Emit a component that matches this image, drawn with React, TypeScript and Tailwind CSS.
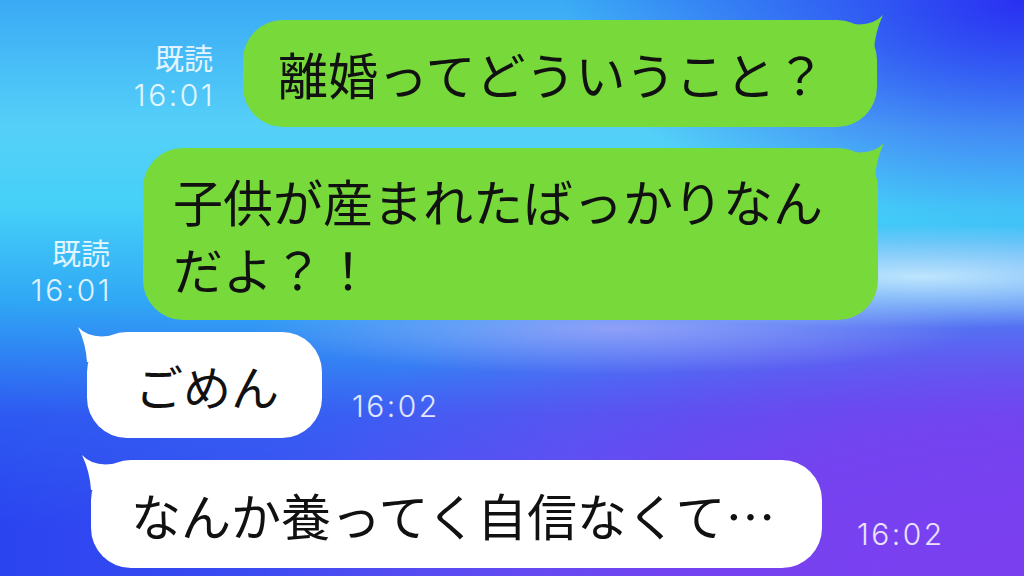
import React from 'react';

const jp = "[font-family:'Noto_Sans_CJK_JP','Noto_Sans',sans-serif]";
const digits = "[font-family:Inter,'Noto_Sans',sans-serif]";

function Horn({ color, side }: { color: string; side: 'left' | 'right' }) {
  return (
    <svg
      width="40"
      height="40"
      viewBox="0 0 40 40"
      className={
        side === 'right'
          ? 'absolute -right-[8px] -top-[6px]'
          : 'absolute -left-[11px] -top-[6px] -scale-x-100'
      }
    >
      <path d="M2 9 Q26 14 38 1 Q30 18 29 36 L2 36 Z" fill={color} />
    </svg>
  );
}

function Stamp({ read, time, className }: { read?: boolean; time: string; className?: string }) {
  return (
    <div className={`flex flex-col items-end text-white/85 ${className ?? ''}`}>
      {read && <span className={`text-[29px] leading-[37px] ${jp}`}>既読</span>}
      <span className={`text-[30px] leading-[39px] font-light tracking-[2.5px] -mr-[2px] ${digits}`}>{time}</span>
    </div>
  );
}

export default function App() {
  return (
    <div
      className={`w-[1024px] h-[576px] overflow-hidden flex flex-col pt-[20px] text-[#111] ${jp} bg-[radial-gradient(ellipse_45%_40%_at_100%_0%,#2a2ff2_0%,transparent_100%),radial-gradient(ellipse_42%_9%_at_90%_48%,rgba(210,242,255,0.85)_0%,transparent_100%),radial-gradient(ellipse_35%_8%_at_60%_57%,rgba(175,170,250,0.7)_0%,transparent_100%),radial-gradient(ellipse_75%_62%_at_100%_100%,#7a40f0_0%,rgba(122,64,240,0.85)_40%,transparent_100%),linear-gradient(180deg,#3aaaf5_0%,#55d0f8_22%,#45d0f8_36%,#30a8f5_52%,rgba(48,110,242,0.5)_72%,transparent_92%),linear-gradient(90deg,#2a44f0_0%,#5055f4_55%,#7040f0_100%)]`}
    >
      {/* sent: 1 */}
      <div className="flex justify-end items-end pr-[147px] gap-[30px]">
        <Stamp read time="16:01" className="pb-[12px]" />
        <div className="relative w-[634px] h-[107px] rounded-[40px] bg-[#78d93a] pl-[35px] flex items-center text-[50px] whitespace-nowrap">
          <Horn color="#78d93a" side="right" />
          <span className="relative">離婚ってどういうこと？</span>
        </div>
      </div>

      {/* sent: 2 */}
      <div className="mt-[21px] flex justify-end items-end pr-[146px] gap-[33px]">
        <Stamp read time="16:01" className="pb-[10px]" />
        <div className="relative w-[735px] h-[172px] rounded-[40px] bg-[#78d93a] pl-[30px] flex items-center text-[50px] leading-[68px] whitespace-nowrap">
          <Horn color="#78d93a" side="right" />
          <span className="relative">
            子供が産まれたばっかりなん
            <br />
            だよ？！
          </span>
        </div>
      </div>

      {/* received: 1 */}
      <div className="mt-[12px] flex items-end pl-[87px] gap-[30px]">
        <div className="relative w-[235px] h-[106px] rounded-[40px] bg-white pl-[48px] flex items-center text-[48px] whitespace-nowrap">
          <Horn color="#ffffff" side="left" />
          <span className="relative">ごめん</span>
        </div>
        <Stamp time="16:02" className="pb-[12px]" />
      </div>

      {/* received: 2 */}
      <div className="mt-[22px] flex items-end pl-[91px] gap-[35px]">
        <div className="relative w-[731px] h-[108px] rounded-[40px] bg-white pl-[40px] flex items-center text-[50px] whitespace-nowrap">
          <Horn color="#ffffff" side="left" />
          <span className="relative">なんか養ってく自信なくて…</span>
        </div>
        <Stamp time="16:02" className="pb-[14px]" />
      </div>
    </div>
  );
}
